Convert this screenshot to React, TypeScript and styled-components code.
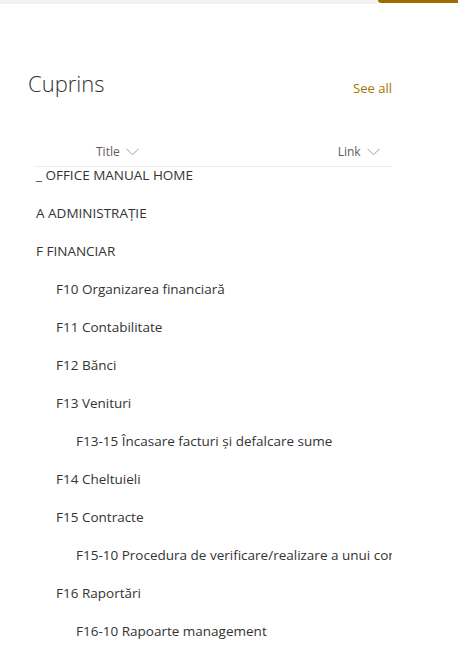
import React from "react";
import styled, { createGlobalStyle } from "styled-components";

const GlobalStyle = createGlobalStyle`
  body {
    margin: 0;
    background: #ffffff;
    font-family: "Open Sans", "Noto Sans", sans-serif;
    color: #323130;
  }
`;

const TopStrip = styled.div`
  display: flex;
  height: 6px;
`;

const StripFill = styled.div`
  flex: 1;
  height: 4px;
  background: #f3f2f1;
`;

const StripAccent = styled.div`
  width: 80px;
  height: 3px;
  background: #9c6d00;
  border-bottom-left-radius: 3px;
`;

const Section = styled.section`
  padding: 61px 66px 0 28px;
`;

const HeaderRow = styled.div`
  display: flex;
  align-items: baseline;
  justify-content: space-between;
`;

const Heading = styled.h2`
  margin: 0;
  font-size: 22px;
  font-weight: 300;
  color: #323130;
  line-height: 32px;
`;

const SeeAll = styled.a`
  font-size: 13px;
  color: #a57600;
  text-decoration: none;
  position: relative;
  top: 1px;
`;

const Table = styled.div`
  margin: 43px 0 0 7px;
`;

const ColumnBar = styled.div`
  display: flex;
  align-items: center;
  box-sizing: border-box;
  height: 25px;
  padding-bottom: 5px;
  border-bottom: 1px solid #edebe9;
`;

const ColumnHead = styled.div<{ $left: number }>`
  display: flex;
  align-items: center;
  gap: 6px;
  margin-left: ${(p) => p.$left}px;
  font-size: 12px;
  color: #605e5c;
`;

const Row = styled.div<{ $level: number }>`
  height: 38px;
  padding-left: ${(p) => 1 + p.$level * 20}px;
  font-size: 13.5px;
  line-height: 16px;
  color: #333333;
  white-space: nowrap;
  overflow: hidden;
`;

const Chevron = () => (
  <svg width="13" height="8" viewBox="0 0 13 8" fill="none">
    <path d="M0.5 0.8 L6.5 6.8 L12.5 0.8" stroke="#a19f9d" strokeWidth="1" />
  </svg>
);

const items: [string, number][] = [
  ["_ OFFICE MANUAL HOME", 0],
  ["A ADMINISTRAȚIE", 0],
  ["F FINANCIAR", 0],
  ["F10 Organizarea financiară", 1],
  ["F11 Contabilitate", 1],
  ["F12 Bănci", 1],
  ["F13 Venituri", 1],
  ["F13-15 Încasare facturi și defalcare sume", 2],
  ["F14 Cheltuieli", 1],
  ["F15 Contracte", 1],
  ["F15-10 Procedura de verificare/realizare a unui contract", 2],
  ["F16 Raportări", 1],
  ["F16-10 Rapoarte management", 2],
];

export default function App() {
  return (
    <>
      <GlobalStyle />
      <TopStrip>
        <StripFill />
        <StripAccent />
      </TopStrip>
      <Section>
        <HeaderRow>
          <Heading>Cuprins</Heading>
          <SeeAll href="#">See all</SeeAll>
        </HeaderRow>
        <Table>
          <ColumnBar>
            <ColumnHead $left={61}>
              Title <Chevron />
            </ColumnHead>
            <ColumnHead $left={199}>
              Link <Chevron />
            </ColumnHead>
          </ColumnBar>
          {items.map(([label, level]) => (
            <Row key={label} $level={level}>
              {label}
            </Row>
          ))}
        </Table>
      </Section>
    </>
  );
}
